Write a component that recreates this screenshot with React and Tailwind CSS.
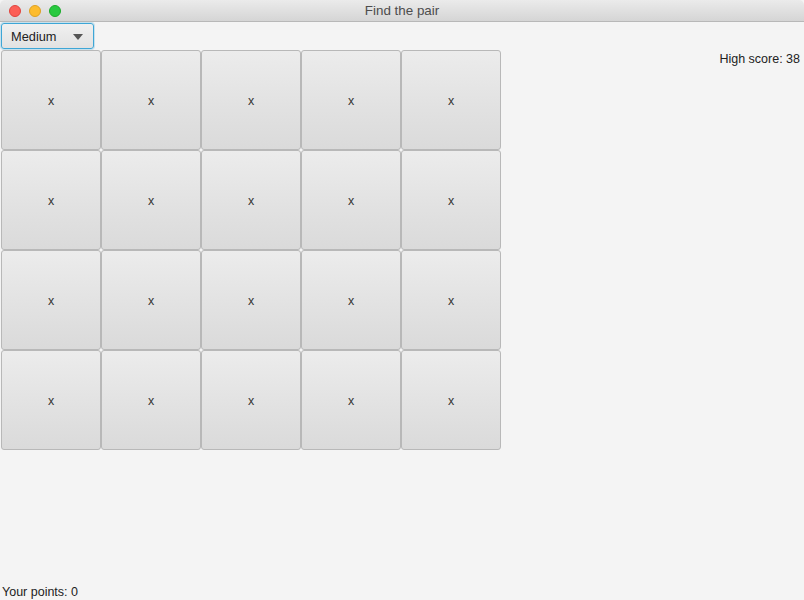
import React from 'react';

// Title bar with traffic-light buttons
const TitleBar = () => (
  <div className="relative h-[22px] flex items-center justify-center bg-gradient-to-b from-[#ebebeb] to-[#d5d5d5] border-b border-[#b8b8b8] rounded-t-[5px]">
    <div className="absolute left-[9px] top-[5px] flex gap-[8px]">
      <div className="w-[12px] h-[12px] rounded-full bg-[#fc5f57] border border-[#e0443e]" />
      <div className="w-[12px] h-[12px] rounded-full bg-[#fdbc2e] border border-[#dea123]" />
      <div className="w-[12px] h-[12px] rounded-full bg-[#28c940] border border-[#1aab29]" />
    </div>
    <span className="text-[13.4px] text-[#4d4d4d] pt-[1px]">Find the pair</span>
  </div>
);

const Cell = () => (
  <button className="w-[100px] h-[100px] flex items-center justify-center pt-[3px] rounded-[3px] border border-[#b8b8b8] bg-gradient-to-b from-[#ececec] to-[#dadada] text-[12.5px] text-[#333]">
    x
  </button>
);

export default function App() {
  const cells = Array.from({ length: 20 });
  return (
    <div className="w-[804px] h-[600px] flex flex-col bg-[#f4f4f4] overflow-hidden font-['Liberation_Sans',Arial,sans-serif]">
      <TitleBar />
      <div className="pl-[1px] pt-[1px] h-[28px]">
        <div className="w-[93px] h-[26px] flex items-center justify-between pl-[9px] pr-[10px] pt-[1px] rounded-[3px] border border-[#3ea6d6] bg-gradient-to-b from-[#f0f0f0] to-[#e2e2e2] shadow-[0_0_0_1px_rgba(62,166,214,0.25)]">
          <span className="text-[12.8px] text-[#222]">Medium</span>
          <span className="w-0 h-0 border-l-[5px] border-r-[5px] border-t-[6px] border-l-transparent border-r-transparent border-t-[#555]" />
        </div>
      </div>
      <div className="flex flex-1 pl-[1px]">
        <div className="grid grid-cols-5 self-start">
          {cells.map((_, i) => (
            <Cell key={i} />
          ))}
        </div>
        <div className="flex-1 flex justify-end pr-[4px] pt-[1px]">
          <span className="text-[12.5px] text-[#222] leading-[16px]">High score: 38</span>
        </div>
      </div>
      <div className="pl-[2px] text-[12.5px] text-[#222] leading-[16px]">Your points: 0</div>
    </div>
  );
}
